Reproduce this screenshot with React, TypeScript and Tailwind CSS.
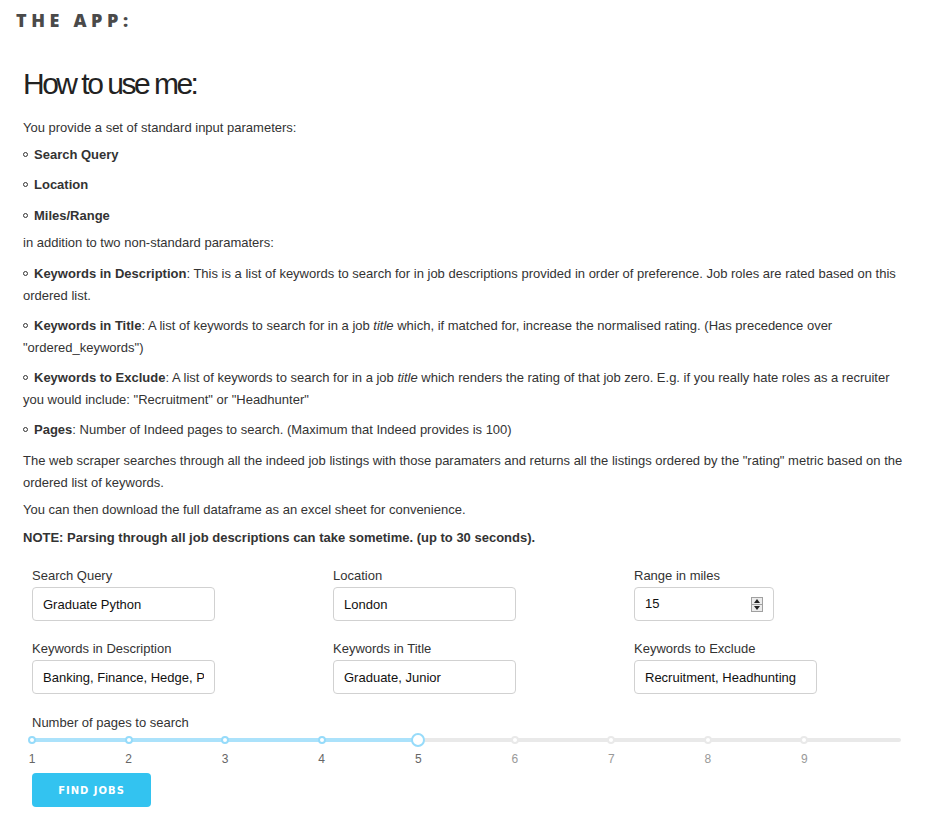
import React from "react";

const font = "font-['Liberation_Sans',Arial,sans-serif]";

function Dot() {
  return <span className="inline-block w-[5px] h-[5px] rounded-full border border-[#333] mr-[6px] align-middle relative -top-[1px]" />;
}

function Field({ label, value, width = "w-[183px]" }: { label: string; value: string; width?: string }) {
  return (
    <div className="flex flex-col">
      <label className="text-[13px] leading-[20px] text-[#333]">{label}</label>
      <input
        readOnly
        value={value}
        className={`mt-[1px] h-[34px] ${width} border border-[#d1d1d1] rounded-[4px] px-[10px] text-[13px] text-[#111] bg-white outline-none`}
      />
    </div>
  );
}

function NumberField() {
  return (
    <div className="flex flex-col">
      <label className="text-[13px] leading-[20px] text-[#333]">Range in miles</label>
      <div className="mt-[1px] h-[34px] w-[140px] border border-[#d1d1d1] rounded-[4px] pl-[10px] pr-[10px] flex items-center justify-between bg-white">
        <span className="text-[13px] text-[#111]">15</span>
        <span className="flex flex-col w-[12px] h-[15px] border border-[#a0a0a0] bg-[#ececec]">
          <span className="flex-1 flex items-center justify-center border-b border-[#a0a0a0]">
            <svg width="6" height="4" viewBox="0 0 6 4"><path d="M0 4 L3 0 L6 4 Z" fill="#222" /></svg>
          </span>
          <span className="flex-1 flex items-center justify-center">
            <svg width="6" height="4" viewBox="0 0 6 4"><path d="M0 0 L6 0 L3 4 Z" fill="#222" /></svg>
          </span>
        </span>
      </div>
    </div>
  );
}

function PageSlider() {
  const value = 5;
  const min = 1;
  const max = 10;
  const pct = (v: number) => ((v - min) / (max - min)) * 100;
  const marks = [1, 2, 3, 4, 5, 6, 7, 8, 9];
  return (
    <div className="relative w-[869px] h-[40px]">
      <div className="absolute left-0 right-0 top-[5px] h-[4px] bg-[#e9e9e9] rounded-full" />
      <div className="absolute left-0 top-[5px] h-[4px] bg-[#abe2fb] rounded-full" style={{ width: `${pct(value)}%` }} />
      {marks.map((m) => (
        <span
          key={m}
          className={`absolute top-[3px] w-[8px] h-[8px] -ml-[4px] rounded-full bg-white border-2 ${m <= value ? "border-[#96dbfa]" : "border-[#e9e9e9]"}`}
          style={{ left: `${pct(m)}%` }}
        />
      ))}
      <span
        className="absolute top-0 w-[14px] h-[14px] -ml-[7px] rounded-full bg-white border-2 border-[#96dbfa]"
        style={{ left: `${pct(value)}%` }}
      />
      {marks.map((m) => (
        <span
          key={m}
          className={`absolute top-[19px] w-[20px] -ml-[10px] text-center text-[12px] leading-[14px] ${m <= value ? "text-[#666]" : "text-[#999]"}`}
          style={{ left: `${pct(m)}%` }}
        >
          {m}
        </span>
      ))}
    </div>
  );
}

export default function App() {
  return (
    <div className={`${font} w-[942px] h-[825px] bg-white text-[#333] overflow-hidden`}>
      <div className="pt-[8px] pl-[16px] h-[32px]">
        <div className="font-['Open_Sans',sans-serif] font-extrabold text-[18px] leading-[24px] tracking-[4.6px] text-[#4a4a4a]">THE APP:</div>
      </div>

      <div className="pl-[23px] pr-[34px]">
        <h1 className="mt-[34px] text-[30px] leading-[36px] tracking-[-2.5px] text-[#222] font-normal">How to use me:</h1>

        <div className="text-[13px] leading-[22px]">
          <p className="mt-[15px]">You provide a set of standard input parameters:</p>
          <p className="mt-[5px]"><Dot /><b>Search Query</b></p>
          <p className="mt-[8px]"><Dot /><b>Location</b></p>
          <p className="mt-[9px]"><Dot /><b>Miles/Range</b></p>
          <p className="mt-[5px]">in addition to two non-standard paramaters:</p>
          <p className="mt-[9px]">
            <Dot /><b>Keywords in Description</b>: This is a list of keywords to search for in job descriptions provided in order of preference. Job roles are rated based on this ordered list.
          </p>
          <p className="mt-[8px]">
            <Dot /><b>Keywords in Title</b>: A list of keywords to search for in a job <i>title</i> which, if matched for, increase the normalised rating. (Has precedence over "ordered_keywords")
          </p>
          <p className="mt-[8px]">
            <Dot /><b>Keywords to Exclude</b>: A list of keywords to search for in a job <i>title</i> which renders the rating of that job zero. E.g. if you really hate roles as a recruiter you would include: "Recruitment" or "Headhunter"
          </p>
          <p className="mt-[8px]">
            <Dot /><b>Pages</b>: Number of Indeed pages to search. (Maximum that Indeed provides is 100)
          </p>
          <p className="mt-[9px]">
            The web scraper searches through all the indeed job listings with those paramaters and returns all the listings ordered by the "rating" metric based on the ordered list of keywords.
          </p>
          <p className="mt-[5px]">You can then download the full dataframe as an excel sheet for convenience.</p>
          <p className="mt-[6px] font-bold">NOTE: Parsing through all job descriptions can take sometime. (up to 30 seconds).</p>
        </div>
      </div>

      <div className="pl-[32px] mt-[17px]">
        <div className="grid grid-cols-3 w-[903px]">
          <Field label="Search Query" value="Graduate Python" />
          <Field label="Location" value="London" />
          <NumberField />
        </div>
        <div className="grid grid-cols-3 w-[903px] mt-[18px]">
          <Field label="Keywords in Description" value="Banking, Finance, Hedge, Python" />
          <Field label="Keywords in Title" value="Graduate, Junior" />
          <Field label="Keywords to Exclude" value="Recruitment, Headhunting" />
        </div>

        <div className="mt-[19px] text-[13px] leading-[20px] text-[#333]">Number of pages to search</div>
        <PageSlider />

        <button className="h-[34px] w-[119px] rounded-[4px] bg-[#33c3f0] text-white text-[10px] font-bold tracking-[1px] uppercase font-['DejaVu_Sans',sans-serif]">
          Find Jobs
        </button>
      </div>
    </div>
  );
}
